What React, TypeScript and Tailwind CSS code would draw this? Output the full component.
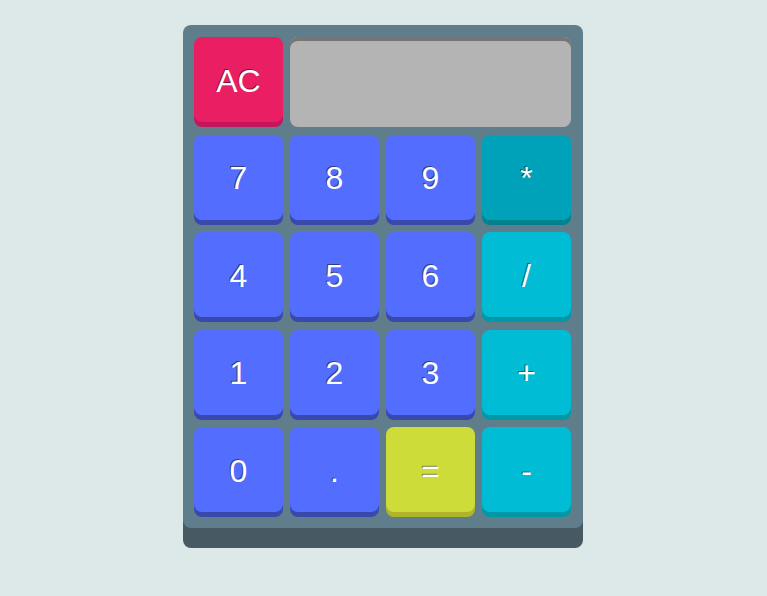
import React from 'react';

type Key = { label: string; kind: 'num' | 'op' | 'mul' | 'eq' };

const keys: Key[] = [
  { label: '7', kind: 'num' },
  { label: '8', kind: 'num' },
  { label: '9', kind: 'num' },
  { label: '*', kind: 'mul' },
  { label: '4', kind: 'num' },
  { label: '5', kind: 'num' },
  { label: '6', kind: 'num' },
  { label: '/', kind: 'op' },
  { label: '1', kind: 'num' },
  { label: '2', kind: 'num' },
  { label: '3', kind: 'num' },
  { label: '+', kind: 'op' },
  { label: '0', kind: 'num' },
  { label: '.', kind: 'num' },
  { label: '=', kind: 'eq' },
  { label: '-', kind: 'op' },
];

const styles = {
  num: 'bg-[#536dfe] shadow-[0_5px_0_#3949ab]',
  op: 'bg-[#00bcd4] shadow-[0_5px_0_#0097a7]',
  mul: 'bg-[#00a2b9] shadow-[0_5px_0_#00838f]',
  eq: 'bg-[#cddc39] shadow-[0_5px_0_#afb42b]',
};

const base =
  'h-[85px] pt-[2px] rounded-lg flex items-center justify-center text-white text-[32px] [text-shadow:-1px_-1px_0_rgba(0,0,0,0.45)]';

export default function App() {
  return (
    <div className="min-h-[596px] bg-[#dde8e8] flex justify-center pt-[25px] pr-px font-['Liberation_Sans',Arial,sans-serif]">
      <div className="w-[400px] h-[503px] bg-[#607d8b] rounded-lg shadow-[0_20px_0_#475a64] pt-[12px] pl-[11px]">
        <div className="grid grid-cols-[repeat(4,89px)] gap-x-[7px] gap-y-[12.5px]">
          <button className={`${base} bg-[#e91e63] shadow-[0_5px_0_#c2185b]`}>AC</button>
          <div className="col-span-3 h-[90px] -mb-[5px] rounded-lg bg-[#b4b4b4] shadow-[inset_0_4px_0_#757575]"></div>
          {keys.map((k) => (
            <button key={k.label} className={`${base} ${styles[k.kind]}`}>
              {k.label}
            </button>
          ))}
        </div>
      </div>
    </div>
  );
}
